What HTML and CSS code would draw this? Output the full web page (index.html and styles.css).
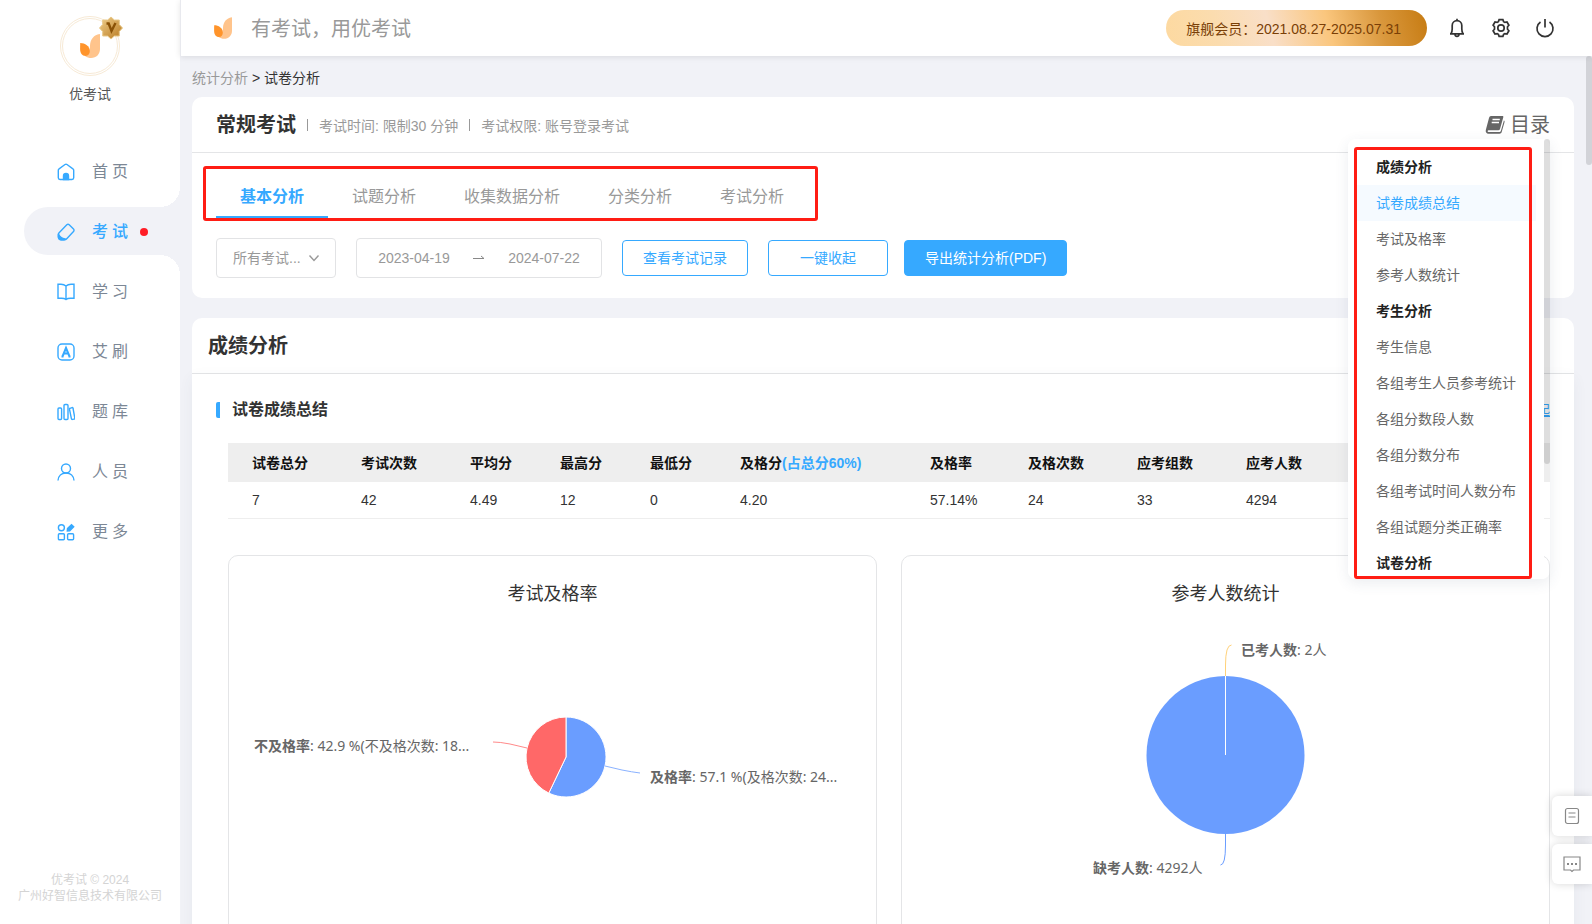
FILE: index.html
```html
<!DOCTYPE html>
<html lang="zh-CN">
<head>
<meta charset="utf-8">
<title>优考试 - 试卷分析</title>
<link rel="stylesheet" href="styles.css">
</head>
<body>
<svg class="defs" aria-hidden="true">
  <symbol id="leaf" viewBox="0 0 20 24">
    <path fill="#ffc48c" d="M19.6 0C14 1 10.400 5 10 11.500c0 4-1 8-5 10.500 2 1.400 4 2 6 2 5.500 0 9-4 9-9V1c0-.6 0-1-.4-1z"/>
    <path fill="#ff942b" d="M.2 9C5 9 9.800 12 9.800 17c0 2.800-1.500 5-4.300 5C2 22 .1 19 .1 15z"/>
  </symbol>
</svg>
<div class="app">
  <aside class="sidebar">
    <div class="profile">
      <div class="avatar">
        <svg class="avatar-logo"><use href="#leaf"/></svg>
        <svg class="badge" viewBox="0 0 24 24">
          <defs><linearGradient id="gold" x1="0" y1="0" x2="1" y2="1"><stop offset="0" stop-color="#f0cf8c"/><stop offset="1" stop-color="#b8791f"/></linearGradient></defs>
          <path fill="url(#gold)" stroke="#e8c888" d="M12 1l3.300 3h5v4.500L23.500 12l-3.200 3.500V20h-5L12 23l-3.300-3h-5v-4.500L.5 12l3.200-3.500V4h5z"/>
          <path fill="none" stroke="#8a5206" stroke-width="2.400" d="M7.500 7.500h2.200L12.500 15l4-8"/>
        </svg>
      </div>
      <div class="profile-name">优考试</div>
    </div>
    <nav class="menu">
      <a class="menu-item" href="#"><svg class="icon" viewBox="0 0 18 18"><path d="M4 16.500H3a1.700 1.700 0 0 1-1.700-1.700V7.200c0-.6.3-1.100.8-1.400L8 1.500c.6-.4 1.400-.4 2 0l5.900 4.300c.5.3.8.8.8 1.400v7.600a1.700 1.700 0 0 1-1.700 1.700z"/><path class="solid" d="M6.500 16.500V13a2.500 2.500 0 0 1 5 0v3.500z"/></svg><span>首页</span></a>
      <a class="menu-item active" href="#"><svg class="icon" viewBox="0 0 18 18"><path d="M9.800 1.800a1.800 1.800 0 0 1 2.400 0l4.300 4.300c.7.7.7 1.700 0 2.400l-7 7.500c-.5.5-1 .8-1.700.8H4.300C2.500 16.800 1.300 15.500 1.300 14v-2.500c0-.8.3-1.300.8-1.800z"/><path class="solid" d="M1.500 11c1 2.500 3 4.300 6.500 5l-1 .7H4.300c-1.700 0-2.800-1.200-2.800-2.700z"/></svg><span>考试</span><i class="dot"></i></a>
      <a class="menu-item" href="#"><svg class="icon" viewBox="0 0 18 18"><path d="M9 3C7.500 1.600 6 1.200 4 1.200H1v14h3.500c2 0 3.300.3 4.500 1.300 1.200-1 2.500-1.300 4.500-1.300H17v-14h-3c-2 0-3.500.4-5 1.800zM9 3v13"/></svg><span>学习</span></a>
      <a class="menu-item" href="#"><svg class="icon" viewBox="0 0 18 18"><rect x="1" y="1" width="16" height="16" rx="4"/><path stroke-width="2" d="M5.500 13.500L9 5l3.500 8.500M6.500 10.500h5M8.500 5h1M4.500 13.500h2M11.500 13.500h2"/></svg><span>艾刷</span></a>
      <a class="menu-item" href="#"><svg class="icon" viewBox="0 0 18 18"><rect x="1" y="5" width="3.600" height="11.500" rx="1"/><rect x="7" y="1.500" width="4" height="15" rx="1"/><path d="M13 5.300l2-.7c.5-.1 1 .1 1 .6l1.800 9.800c.1.600-.2 1-.7 1.100l-1.600.3c-.6.1-1-.2-1.100-.7L12.500 6.300c-.1-.5.100-.9.500-1z"/></svg><span>题库</span></a>
      <a class="menu-item" href="#"><svg class="icon" viewBox="0 0 18 18"><circle cx="9" cy="5.500" r="4.500"/><path d="M1 17.500C1.300 13 4.500 10 9 10s7.700 3 8 7.500"/></svg><span>人员</span></a>
      <a class="menu-item" href="#"><svg class="icon" viewBox="0 0 18 18"><circle cx="4.400" cy="4.800" r="3"/><rect x="1.400" y="10.800" width="6" height="6" rx="1"/><rect x="10.600" y="10.800" width="6" height="6" rx="1"/><path class="solid" d="M10.500 5.500l4-3.800 2.200 2.100-4 4-2.400.2z"/></svg><span>更多</span></a>
    </nav>
    <footer class="copyright">优考试 © 2024<br>广州好智信息技术有限公司</footer>
  </aside>

  <div class="page">
    <header class="topbar">
      <svg class="brand-logo"><use href="#leaf"/></svg>
      <span class="slogan">有考试，用优考试</span>
      <span class="member">旗舰会员：2021.08.27-2025.07.31</span>
      <button class="tool" aria-label="通知"><svg viewBox="0 0 20 20"><path d="M10 .8v1.400M3 15.800h14M4 15.800c1-1.300 1.200-2.600 1.200-5V7.500a4.800 4.800 0 0 1 9.600 0v3.300c0 2.400.2 3.700 1.200 5M8 16.500c.2 2.400 3.800 2.400 4 0"/></svg></button>
      <button class="tool" aria-label="设置"><svg viewBox="0 0 20 20"><circle cx="10" cy="10" r="3.200"/><path d="M8.100 1.600h3.800l.7 2 1.300.8 2.100-.4 1.900 3.200-1.400 1.600v2.400l1.400 1.600-1.900 3.200-2.100-.4-1.300.8-.7 2H8.100l-.7-2-1.300-.8-2.100.4-1.900-3.200 1.400-1.600V8.800L2.100 7.200 4 4l2.100.4 1.300-.8z"/></svg></button>
      <button class="tool" aria-label="退出"><svg viewBox="0 0 20 20"><path d="M10 1v8.500M5.500 4a8 8 0 1 0 9 0"/></svg></button>
    </header>

    <main class="content">
      <nav class="crumbs"><a href="#">统计分析</a> &gt; <span>试卷分析</span></nav>

      <section class="card">
        <div class="card-head exam-head">
          <h1 class="title">常规考试</h1>
          <p class="meta"><i class="bar"></i>考试时间: 限制30 分钟<i class="bar"></i>考试权限: 账号登录考试</p>
          <button class="toc-toggle"><svg viewBox="0 0 20 20"><path fill="#666" d="M6 1h11.500c.8 0 1 .7.8 1.300L15 14c-.3.800-.8 1.200-1.600 1.200H3.500c-1 0-1.300 1.800 0 1.800h10.800c.8 0 1.300-.3 1.600-1.200l3-10.300c.8.4.8 1 .6 1.700L16.700 17c-.3 1-1.100 1.700-2.200 1.700H3.500C1.500 18.700.3 17 .8 15L4 3c.4-1.300 1-2 2-2z"/><path stroke="#fff" stroke-width="1.300" d="M7.500 4.500h7.300M6.700 7.500H14"/></svg>目录</button>
          <div class="toc">
            <ul class="toc-list">
              <li class="toc-group">成绩分析</li>
              <li><a class="current" href="#summary">试卷成绩总结</a></li>
              <li><a href="#pass">考试及格率</a></li>
              <li><a href="#attend">参考人数统计</a></li>
              <li class="toc-group">考生分析</li>
              <li><a href="#">考生信息</a></li>
              <li><a href="#">各组考生人员参考统计</a></li>
              <li><a href="#">各组分数段人数</a></li>
              <li><a href="#">各组分数分布</a></li>
              <li><a href="#">各组考试时间人数分布</a></li>
              <li><a href="#">各组试题分类正确率</a></li>
              <li class="toc-group">试卷分析</li>
            </ul>
            <i class="toc-thumb"></i>
            <i class="mark toc-mark"></i>
          </div>
        </div>
        <div class="exam-body">
          <div class="tabs">
            <button class="tab selected">基本分析</button><button class="tab">试题分析</button><button class="tab">收集数据分析</button><button class="tab">分类分析</button><button class="tab">考试分析</button>
            <i class="mark tabs-mark"></i>
          </div>
          <div class="filters">
            <div class="select-box">
              <select aria-label="考试范围"><option>所有考试...</option></select>
              <svg class="chevron" viewBox="0 0 12 12"><path d="M1.500 3.500L6 8.500l4.500-5"/></svg>
            </div>
            <div class="dates">
              <input type="text" aria-label="开始日期" value="2023-04-19">
              <svg class="arrow" viewBox="0 0 12 12"><path d="M0 6.500h11L8 4"/></svg>
              <input type="text" aria-label="结束日期" value="2024-07-22">
            </div>
            <button class="btn">查看考试记录</button>
            <div class="btn-pair">
              <button class="btn">一键收起</button>
              <button class="btn primary">导出统计分析(PDF)</button>
            </div>
          </div>
        </div>
      </section>

      <section class="card results">
        <div class="card-head"><h2 class="title">成绩分析</h2></div>
        <div class="results-body">
          <div class="sub-head" id="summary"><h3>试卷成绩总结</h3><a href="#">收起</a></div>
          <table class="scores">
            <colgroup><col class="w-wide"><col class="w-wide"><col class="w-slim"><col class="w-slim"><col class="w-slim"><col class="w-pass"><col class="w-rate"><col class="w-wide"><col class="w-wide"><col></colgroup>
            <thead><tr><th>试卷总分</th><th>考试次数</th><th>平均分</th><th>最高分</th><th>最低分</th><th>及格分<em>(占总分60%)</em></th><th>及格率</th><th>及格次数</th><th>应考组数</th><th>应考人数</th></tr></thead>
            <tbody><tr><td>7</td><td>42</td><td>4.49</td><td>12</td><td>0</td><td>4.20</td><td>57.14%</td><td>24</td><td>33</td><td>4294</td></tr></tbody>
          </table>
          <div class="charts">
            <article class="chart" id="pass">
              <h4>考试及格率</h4>
              <svg class="plot" viewBox="0 0 601 360">
                <g stroke="#fff">
                  <path fill="#6a9dff" d="M314 150V110a40 40 0 1 1-17.200 76.100z"/>
                  <path fill="#ff6868" d="M314 150L296.800 186.100A40 40 0 0 1 314 110z"/>
                </g>
                <path class="line" stroke="#ff8a8a" d="M275 141l-17-4q-10-2-17-2"/>
                <path class="line" stroke="#8ab2ff" d="M353 159l17 4q10 2 18 3"/>
                <text x="2" y="144"><tspan class="strong">不及格率</tspan>: 42.9 %(不及格次数: 18...</text>
                <text x="398" y="175"><tspan class="strong">及格率</tspan>: 57.1 %(及格次数: 24...</text>
              </svg>
            </article>
            <article class="chart" id="attend">
              <h4>参考人数统计</h4>
              <svg class="plot" viewBox="0 0 601 360">
                <circle cx="300.500" cy="148" r="79" fill="#6a9dff"/>
                <path stroke="#fff" d="M300.500 69v79"/>
                <path class="line" stroke="#ffd27a" d="M300.500 69V58q0-20 6-20"/>
                <path class="line" stroke="#6a9dff" d="M300.500 227v11q0 20-5 20"/>
                <text x="316" y="48"><tspan class="strong">已考人数</tspan>: 2人</text>
                <text x="168" y="266"><tspan class="strong">缺考人数</tspan>: 4292人</text>
              </svg>
            </article>
          </div>
        </div>
      </section>
      <i class="page-thumb"></i>
    </main>
  </div>
  <div class="float-tools">
    <button aria-label="文档"><svg viewBox="0 0 20 20"><rect x="3.500" y="2.500" width="13" height="15" rx="2"/><path d="M6.500 7h7M6.500 11h7"/></svg></button>
    <button aria-label="反馈"><svg viewBox="0 0 20 20"><path d="M2 3h16v13h-6.500L10 17.500 8.500 16H2z"/><path stroke-dasharray="2 2" stroke-width="2" d="M5 10h10"/></svg></button>
  </div>
</div>
</body>
</html>
```
FILE: styles.css
```css
* { box-sizing: border-box; }
body { margin: 0; overflow: hidden; background: #f1f2f7; color: #333; font: 14px/20px "Liberation Sans", "Noto Sans CJK SC", sans-serif; }
button, input, select { margin: 0; padding: 0; border: 0; background: none; color: inherit; font: inherit; }
button { cursor: pointer; }
h1, h2, h3, h4, p, ul { margin: 0; padding: 0; }
ul { list-style: none; }
a { color: inherit; text-decoration: none; }
i, em { font-style: normal; }
svg { display: block; fill: none; }
.defs { position: absolute; width: 0; height: 0; }

.app { display: flex; height: 100vh; }

/* Sidebar */
.sidebar { display: flex; flex: none; flex-direction: column; width: 180px; background: #fff; }
.profile { display: flex; flex-direction: column; align-items: center; gap: 8px; height: 147px; padding-top: 16px; color: #555; }
.avatar { position: relative; display: flex; align-items: center; justify-content: center; width: 60px; height: 60px; border: 3px double #f7ead6; border-radius: 50%; }
.avatar-logo { width: 20px; height: 26px; }
.badge { position: absolute; top: -3px; right: -6px; width: 24px; height: 24px; }
.menu { display: grid; gap: 12px; }
.menu-item { position: relative; display: flex; align-items: center; height: 48px; margin-left: 24px; padding: 2px 0 0 33px; gap: 17px; color: #7c8795; font-size: 16px; }
.menu-item span { letter-spacing: 4px; }
.icon { width: 18px; height: 18px; stroke: #36a9ff; stroke-width: 1.4; }
.solid { fill: #36a9ff; }
.menu-item.active { border-radius: 24px 0 0 24px; background: #f1f2f7; color: #36a9ff; font-weight: 500; }
.menu-item.active::before, .menu-item.active::after { content: ""; position: absolute; right: 0; width: 20px; height: 20px; }
.menu-item.active::before { bottom: 100%; background: radial-gradient(circle at 0 0, transparent 20px, #f1f2f7 20px); }
.menu-item.active::after { top: 100%; background: radial-gradient(circle at 0 100%, transparent 20px, #f1f2f7 20px); }
.dot { width: 8px; height: 8px; margin-left: -9px; border-radius: 50%; background: #ff1d26; }
.copyright { margin-top: auto; padding-bottom: 20px; color: #d4d4d4; font-size: 12px; line-height: 16px; text-align: center; }

/* Top bar */
.page { display: flex; flex: 1; flex-direction: column; min-width: 0; }
.topbar { z-index: 1; display: flex; flex: none; align-items: center; height: 56px; padding: 0 36px 0 33px; border-left: 1px solid #e8e9ee; background: #fff; box-shadow: 0 1px 6px rgba(0, 0, 0, .1); }
.brand-logo { width: 18px; height: 22px; }
.slogan { margin-left: 19px; padding-top: 2px; color: #999; font-size: 20px; }
.member { height: 36px; margin: 0 19px 0 auto; padding: 1px 26px 0 20px; border-radius: 18px; background: linear-gradient(75deg, #fdd9a0 0%, #fbdcae 20%, #f9dfc8 40%, #fac67d 62%, #d9973c 82%, #c67b12 100%); color: #7a3f06; line-height: 36px; }
.tool { width: 22px; height: 22px; margin-left: 22px; }
.member + .tool { margin-left: 0; }
.tool svg { width: 20px; height: 20px; margin: auto; stroke: #333; stroke-width: 1.7; }

/* Content */
.content { position: relative; flex: 1; min-height: 0; padding: 12px 18px 0 12px; }
.crumbs { height: 29px; }
.crumbs a { color: #999; }
.card { margin-bottom: 20px; border-radius: 10px; background: #fff; }
.card-head { display: flex; align-items: center; height: 56px; padding: 0 16px; border-bottom: 1px solid #e4e5e7; }
.title { padding-top: 1px; font-size: 20px; font-weight: 700; }
.exam-head { position: relative; padding: 0 24px; }
.meta { padding-top: 3px; color: #999; }
.bar { display: inline-block; width: 1px; height: 12px; margin: 0 11px; background: #999; }
.toc-toggle { display: flex; align-items: center; gap: 5px; margin-left: auto; color: #666; font-size: 20px; }
.toc-toggle svg { width: 20px; height: 20px; }

.toc { position: absolute; z-index: 2; top: 42px; right: 24px; width: 202px; height: 440px; padding-right: 6px; border-radius: 8px; box-shadow: 0 4px 14px rgba(60, 80, 110, .1); }
.toc-list { height: 100%; padding: 10px 8px 0; overflow: hidden; border-radius: 8px 0 0 8px; background: #fff; color: #666; }
.toc-list li, .toc-list a { height: 36px; line-height: 36px; }
.toc-list a { display: block; padding-left: 20px; }
.toc-list .current { background: #f5faff; color: #36a9ff; }
.toc-list .toc-group { padding-left: 20px; color: #222; font-weight: 700; }
.toc-thumb { position: absolute; top: 0; right: 0; width: 6px; height: 325px; border-radius: 3px; background: rgba(0, 0, 0, .13); }
.mark { position: absolute; border: 3px solid #ff1d14; border-radius: 3px; pointer-events: none; }
.toc-mark { inset: 8px 18px 0 6px; }

.exam-body { padding: 20px 24px; }
.tabs { position: relative; display: flex; width: max-content; }
.tab { height: 45px; padding: 4px 24px 0; border-bottom: 2px solid transparent; color: #999; font-size: 16px; }
.tab.selected { border-color: #36a9ff; color: #36a9ff; font-weight: 700; }
.tabs-mark { inset: -7px -10px -3px -13px; }
.filters { display: flex; align-items: center; gap: 20px; padding-top: 20px; }
.select-box { position: relative; width: 120px; }
.select-box select { width: 100%; height: 40px; padding-left: 16px; appearance: none; border: 1px solid #e2e3e5; border-radius: 4px; color: #999; }
.chevron { position: absolute; top: 14px; right: 16px; width: 12px; height: 12px; stroke: #999; stroke-width: 1.4; pointer-events: none; }
.dates { display: flex; align-items: center; justify-content: space-between; width: 246px; height: 40px; padding: 0 20px; border: 1px solid #e2e3e5; border-radius: 4px; color: #999; }
.dates input { width: 74px; text-align: center; }
.arrow { width: 12px; height: 12px; stroke: #888; }
.btn { min-width: 120px; height: 36px; padding: 0 20px; border: 1px solid #36a9ff; border-radius: 4px; color: #36a9ff; }
.btn.primary { background: #36a9ff; color: #fff; }
.btn-pair { display: flex; gap: 16px; }

.results-body { padding: 26px 24px 0 36px; box-shadow: 0 4px 14px rgba(60, 80, 110, .06); }
.sub-head { display: flex; align-items: center; justify-content: space-between; height: 20px; margin-left: -12px; }
.sub-head h3 { padding-left: 12px; border-left: 4px solid #36a9ff; border-radius: 2px; font-size: 16px; line-height: 16px; }
.sub-head a { color: #36a9ff; text-decoration: underline; }
.scores { width: 100%; margin: 23px 0 36px; border-collapse: collapse; table-layout: fixed; text-align: left; }
.scores th, .scores td { height: 36px; padding: 0 0 0 24px; white-space: nowrap; }
.scores th { height: 39px; background: #eee; color: #111; }
.scores td { border-bottom: 1px solid #eee; }
.scores em { color: #36a9ff; }
.w-wide { width: 109px; }
.w-slim { width: 90px; }
.w-pass { width: 190px; }
.w-rate { width: 98px; }

.charts { display: grid; grid-template-columns: 1fr 1fr; gap: 24px; }
.chart { display: flex; flex-direction: column; align-items: center; min-width: 0; padding-top: 26px; border: 1px solid #e4e5e7; border-radius: 10px; }
.chart h4 { font-size: 18px; font-weight: 400; line-height: 25px; }
.plot { flex: none; width: 601px; height: 360px; }
.plot text { fill: #666; font: 14px "Noto Sans", "Noto Sans CJK SC", sans-serif; }
.plot .strong { font-weight: 700; }

.page-thumb { position: absolute; top: 0; right: 0; width: 6px; height: 109px; border-radius: 3px; background: #d2d3d8; }
.float-tools { position: fixed; z-index: 3; right: 0; bottom: 40px; display: grid; gap: 8px; }
.float-tools button { display: grid; place-items: center; width: 40px; height: 40px; border-radius: 6px 0 0 6px; background: #fff; box-shadow: 0 0 8px rgba(0, 0, 0, .16); }
.float-tools svg { width: 20px; height: 20px; stroke: #888; stroke-width: 1.2; }
```
